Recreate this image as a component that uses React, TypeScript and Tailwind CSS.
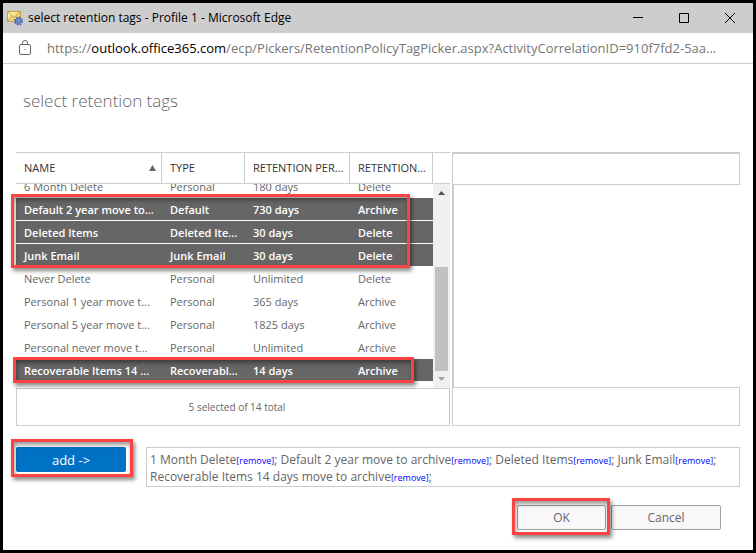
import type { ReactNode } from "react";

type Tag = { name: string; type: string; period: string; action: string; selected?: boolean };

const tags: Tag[] = [
  { name: "6 Month Delete", type: "Personal", period: "180 days", action: "Delete" },
  { name: "Default 2 year move to...", type: "Default", period: "730 days", action: "Archive", selected: true },
  { name: "Deleted Items", type: "Deleted Ite...", period: "30 days", action: "Delete", selected: true },
  { name: "Junk Email", type: "Junk Email", period: "30 days", action: "Delete", selected: true },
  { name: "Never Delete", type: "Personal", period: "Unlimited", action: "Delete" },
  { name: "Personal 1 year move t...", type: "Personal", period: "365 days", action: "Archive" },
  { name: "Personal 5 year move t...", type: "Personal", period: "1825 days", action: "Archive" },
  { name: "Personal never move t...", type: "Personal", period: "Unlimited", action: "Archive" },
  { name: "Recoverable Items 14 ...", type: "Recoverabl...", period: "14 days", action: "Archive", selected: true },
];

const chosen = [
  "1 Month Delete",
  "Default 2 year move to archive",
  "Deleted Items",
  "Junk Email",
  "Recoverable Items 14 days move to archive",
];

function Highlight({ className }: { className: string }) {
  return (
    <div
      aria-hidden="true"
      className={`pointer-events-none absolute border-3 border-[#fb4343] shadow-[2px_3px_4px_rgba(0,0,0,0.45),inset_1px_3px_4px_rgba(0,0,0,0.4)] ${className}`}
    />
  );
}

function MailIcon() {
  return (
    <svg width="16" height="16" viewBox="0 0 16 16" className="shrink-0" aria-hidden="true">
      <defs>
        <linearGradient id="envelope" x1="0" y1="0" x2="1" y2="1">
          <stop offset="0" stopColor="#fff6c0" />
          <stop offset="1" stopColor="#e9bf45" />
        </linearGradient>
      </defs>
      <rect x="0.5" y="1.5" width="13" height="10" fill="url(#envelope)" stroke="#c9a040" />
      <path d="M1 2l6 5.500L13 2M1 11l4.500-5M13 11L8.500 6" fill="none" stroke="#c09030" strokeWidth="0.800" />
      <circle cx="11.500" cy="11" r="3.600" fill="none" stroke="#3f62b0" strokeWidth="1.800" strokeDasharray="1.600 1.200" />
      <circle cx="11.500" cy="11" r="2.900" fill="#7e9bdc" stroke="#3f62b0" strokeWidth="0.800" />
      <circle cx="11.500" cy="11" r="1" fill="#e8eefc" stroke="#2f4c90" strokeWidth="0.800" />
    </svg>
  );
}

function Header({ children, last }: { children?: ReactNode; last?: boolean }) {
  return (
    <th
      className={`flex items-center justify-between pl-2 text-left font-normal text-[#333] ${last ? "" : "border-r border-[#c8ced0]"}`}
    >
      {children}
    </th>
  );
}

export default function App() {
  return (
    <div className="flex min-h-screen flex-col border-3 border-black bg-white font-['Open_Sans','Noto_Sans',sans-serif] text-[#666]">
      <header className="flex h-[30px] items-center bg-[#cdcdcd] pl-1 text-black">
        <MailIcon />
        <h1 className="ml-[5px] flex-1 text-[12px] leading-4 whitespace-nowrap">
          select retention tags - Profile 1 - Microsoft Edge
        </h1>
        <button aria-label="Minimize" className="flex h-full w-[46px] items-center justify-center">
          <svg width="10" height="10" viewBox="0 0 10 10"><path d="M0 4.500h10" stroke="#000" /></svg>
        </button>
        <button aria-label="Maximize" className="flex h-full w-[46px] items-center justify-center">
          <svg width="10" height="10" viewBox="0 0 10 10"><path d="M.5.5h9v9h-9z" fill="none" stroke="#000" /></svg>
        </button>
        <button aria-label="Close" className="flex h-full w-[46px] items-center justify-center">
          <svg width="10" height="10" viewBox="0 0 10 10"><path d="M0 0l10 10M10 0L0 10" stroke="#000" /></svg>
        </button>
      </header>
      <div className="flex h-[31px] items-center border-b border-[#ccc] pr-5 pl-4">
        <svg width="12" height="16" viewBox="0 0 12 16" className="shrink-0" fill="none" stroke="#666" aria-hidden="true">
          <rect x="0.5" y="4.500" width="11" height="10" rx="1.500" />
          <path d="M3.500 4.500V3a2.500 2.500 0 0 1 5 0v1.500" />
          <path d="M5.500 9.500h1" />
        </svg>
        <p className="ml-4 text-[13px] leading-5 whitespace-nowrap text-[#767676]">
          https://<span className="text-black">outlook.office365.com</span>
          /ecp/Pickers/RetentionPolicyTagPicker.aspx?ActivityCorrelationID=910f7fd2-5aa...
        </p>
      </div>

      <main className="flex flex-col px-[13px]">
        <h2 className="mt-[23px] ml-[7px] text-[17px] leading-7 font-light">select retention tags</h2>

        <div className="mt-[37px] flex gap-[2px]">
          <section className="relative w-[434px] shrink-0 text-[11px] leading-4">
            <table className="block border-t border-[#c8ced0]">
              <thead className="block border-b border-[#c8ced0]">
                <tr className="grid h-[30px] grid-cols-[146px_83px_105px_83px_1fr]">
                  <Header>
                    NAME
                    <svg width="7" height="6" viewBox="0 0 7 6" className="mr-[5px]" aria-hidden="true">
                      <path d="M3.500 0L7 6H0z" fill="#666" />
                    </svg>
                  </Header>
                  <Header>TYPE</Header>
                  <Header>RETENTION PER...</Header>
                  <Header>RETENTION...</Header>
                  <Header last />
                </tr>
              </thead>
              <tbody className="mr-[17px] flex h-[204px] flex-col justify-end overflow-hidden pb-[6px]">
                {tags.map((tag) => (
                  <tr
                    key={tag.name}
                    className={`grid h-[23px] shrink-0 grid-cols-[146px_83px_105px_83px] items-end border-b border-white pb-[2px] whitespace-nowrap ${tag.selected ? "bg-[#666] font-semibold text-white" : ""}`}
                  >
                    <td className="pl-2">{tag.name}</td>
                    <td className="pl-2">{tag.type}</td>
                    <td className="pl-2">{tag.period}</td>
                    <td className="pl-2">{tag.action}</td>
                  </tr>
                ))}
              </tbody>
            </table>
            <div className="absolute top-8 right-0 flex h-[204px] w-[17px] flex-col items-center bg-[#f0f0f0]" aria-hidden="true">
              <svg width="7" height="4" viewBox="0 0 7 4" className="mt-[7px]"><path d="M3.500 0L7 4H0z" fill="#505050" /></svg>
              <div className="mt-[72px] h-[104px] w-[13px] bg-[#c1c1c1]" />
              <svg width="7" height="4" viewBox="0 0 7 4" className="mt-[6px]"><path d="M3.500 4L7 0H0z" fill="#a0a0a0" /></svg>
            </div>
            <p className="flex h-[38px] items-center justify-center border border-[#c8ced0] pl-2 text-[10px]">
              5 selected of 14 total
            </p>
            <Highlight className="top-[42px] -left-[5px] h-[74px] w-[399px]" />
            <Highlight className="top-[205px] -left-[3px] h-[26px] w-[401px]" />
          </section>

          <section className="flex flex-1 flex-col" aria-label="Tag details">
            <div className="h-[33px] border border-t-2 border-[#c8ced0]" />
            <div className="flex-1 border-l-2 border-[#c8ced0]" />
            <div className="h-[39px] border border-[#c8ced0]" />
          </section>
        </div>

        <div className="mt-[21px] flex items-start">
          <div className="relative">
            <button className="block h-[25px] w-[110px] rounded-xs bg-[#0072c6] text-[13px] leading-6 text-white">add -&gt;</button>
            <Highlight className="-top-2 -left-[5px] h-[38px] w-[122px]" />
          </div>
          <p className="ml-5 h-10 flex-1 border border-[#c8ced0] px-[3px] pt-1 text-[12px] leading-4">
            {chosen.map((name) => (
              <span key={name}>
                {name}
                <a href="#remove" className="text-[9px] text-[#0000ff]">[remove]</a>;{" "}
              </span>
            ))}
          </p>
        </div>

        <div className="mt-[18px] mr-[19px] flex justify-end gap-[5px] text-[12px] leading-4">
          <div className="relative">
            <button className="block h-[25px] w-[89px] rounded-xs border border-[#98a3a6] bg-[#f8f8f8] pt-px">OK</button>
            <Highlight className="-top-[7px] -left-[5px] h-[37px] w-[98px]" />
          </div>
          <button className="block h-[25px] w-[110px] rounded-xs border border-[#98a3a6] bg-[#f8f8f8] pt-px">Cancel</button>
        </div>
      </main>
    </div>
  );
}
